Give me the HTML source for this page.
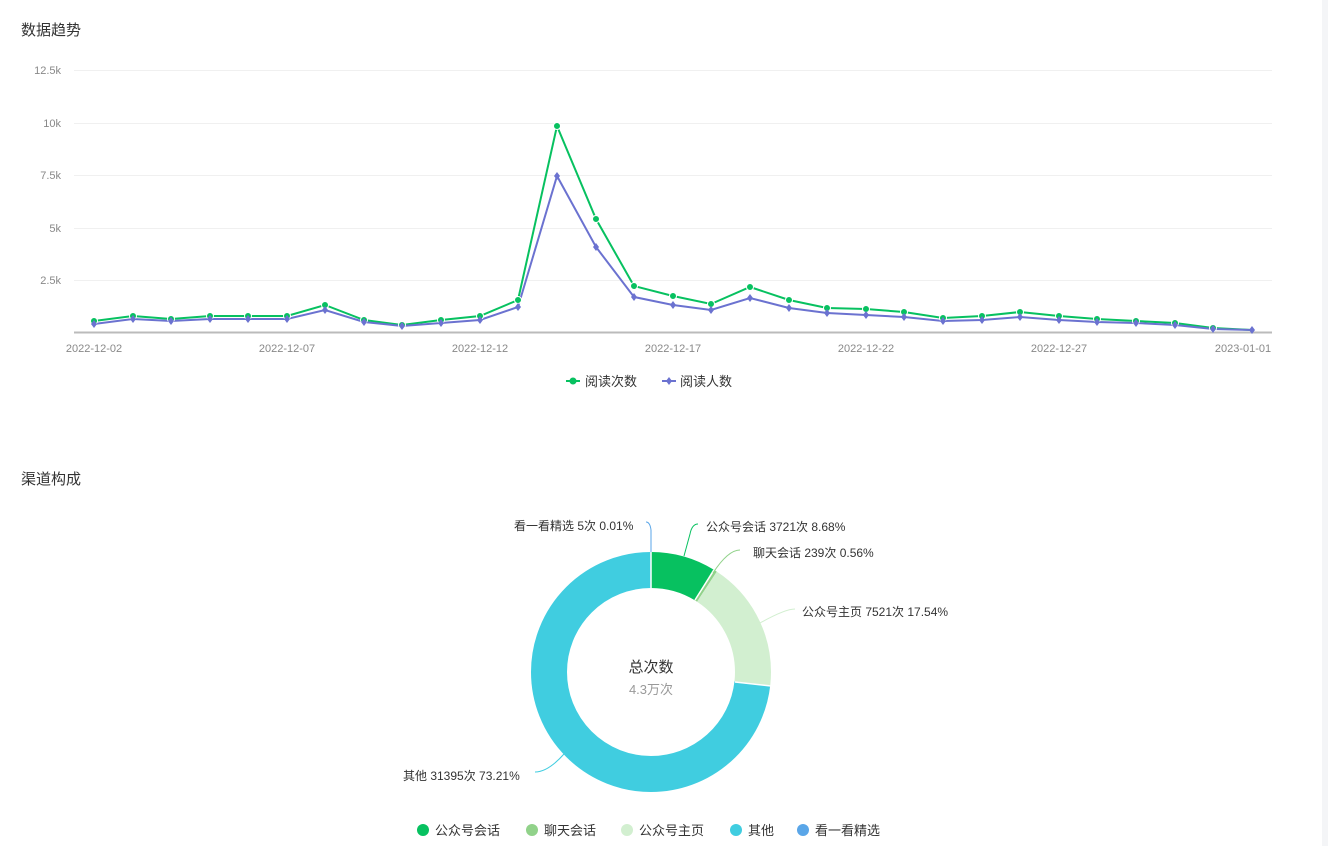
<!DOCTYPE html>
<html><head><meta charset="utf-8"><style>
body{margin:0;width:1328px;height:846px;background:#fff;font-family:"Liberation Sans","Noto Sans CJK SC",sans-serif;overflow:hidden;position:relative}
.side{position:absolute;right:0;top:0;width:6px;height:846px;background:#f4f5f7}
.t{position:absolute;left:21px;font-size:15px;color:#333}
</style></head><body>
<div class="side"></div>
<div class="t" style="top:19px">数据趋势</div>
<div class="t" style="top:468px">渠道构成</div>
<svg width="1328" height="846" style="position:absolute;left:0;top:0" font-family="Liberation Sans,Noto Sans CJK SC,sans-serif">
<g stroke="#f0f0f0" stroke-width="1">
<line x1="74" x2="1272" y1="70.5" y2="70.5"/><line x1="74" x2="1272" y1="123.5" y2="123.5"/><line x1="74" x2="1272" y1="175.5" y2="175.5"/><line x1="74" x2="1272" y1="228.5" y2="228.5"/><line x1="74" x2="1272" y1="280.5" y2="280.5"/>
</g>
<line x1="74" x2="1272" y1="332.5" y2="332.5" stroke="#bbb" stroke-width="2"/>
<g fill="#888" font-size="11" text-anchor="end">
<text x="61" y="74">12.5k</text><text x="61" y="127">10k</text><text x="61" y="179">7.5k</text><text x="61" y="232">5k</text><text x="61" y="284">2.5k</text>
</g>
<g fill="#888" font-size="11" text-anchor="middle">
<text x="94" y="352">2022-12-02</text><text x="287" y="352">2022-12-07</text><text x="480" y="352">2022-12-12</text><text x="673" y="352">2022-12-17</text><text x="866" y="352">2022-12-22</text><text x="1059" y="352">2022-12-27</text><text x="1243" y="352">2023-01-01</text>
</g>
<polyline fill="none" stroke="#07c160" stroke-width="2" points="94,321 133,316 171,319 210,316 248,316 287,316 325,305 364,320 402,325 441,320 480,316 518,300 557,126 596,219 634,286 673,296 711,304 750,287 789,300 827,308 866,309 904,312 943,318 982,316 1020,312 1059,316 1097,319 1136,321 1175,323 1213,328 1252,330"/>
<polyline fill="none" stroke="#6b72d0" stroke-width="2" points="94,324 133,319 171,321 210,319 248,319 287,319 325,310 364,322 402,326 441,323 480,320 518,307 557,176 596,247 634,297 673,305 711,310 750,298 789,308 827,313 866,315 904,317 943,321 982,320 1020,317 1059,320 1097,322 1136,323 1175,325 1213,329 1252,330"/>
<g fill="#07c160" stroke="#fff" stroke-width="1">
<circle cx="94" cy="321" r="3.5"/><circle cx="133" cy="316" r="3.5"/><circle cx="171" cy="319" r="3.5"/><circle cx="210" cy="316" r="3.5"/><circle cx="248" cy="316" r="3.5"/><circle cx="287" cy="316" r="3.5"/><circle cx="325" cy="305" r="3.5"/><circle cx="364" cy="320" r="3.5"/><circle cx="402" cy="325" r="3.5"/><circle cx="441" cy="320" r="3.5"/><circle cx="480" cy="316" r="3.5"/><circle cx="518" cy="300" r="3.5"/><circle cx="557" cy="126" r="3.5"/><circle cx="596" cy="219" r="3.5"/><circle cx="634" cy="286" r="3.5"/><circle cx="673" cy="296" r="3.5"/><circle cx="711" cy="304" r="3.5"/><circle cx="750" cy="287" r="3.5"/><circle cx="789" cy="300" r="3.5"/><circle cx="827" cy="308" r="3.5"/><circle cx="866" cy="309" r="3.5"/><circle cx="904" cy="312" r="3.5"/><circle cx="943" cy="318" r="3.5"/><circle cx="982" cy="316" r="3.5"/><circle cx="1020" cy="312" r="3.5"/><circle cx="1059" cy="316" r="3.5"/><circle cx="1097" cy="319" r="3.5"/><circle cx="1136" cy="321" r="3.5"/><circle cx="1175" cy="323" r="3.5"/><circle cx="1213" cy="328" r="3.5"/>
</g>
<g fill="#6b72d0">
<path d="M94 320l3 4-3 4-3-4z"/><path d="M133 315l3 4-3 4-3-4z"/><path d="M171 317l3 4-3 4-3-4z"/><path d="M210 315l3 4-3 4-3-4z"/><path d="M248 315l3 4-3 4-3-4z"/><path d="M287 315l3 4-3 4-3-4z"/><path d="M325 306l3 4-3 4-3-4z"/><path d="M364 318l3 4-3 4-3-4z"/><path d="M402 322l3 4-3 4-3-4z"/><path d="M441 319l3 4-3 4-3-4z"/><path d="M480 316l3 4-3 4-3-4z"/><path d="M518 303l3 4-3 4-3-4z"/><path d="M557 172l3 4-3 4-3-4z"/><path d="M596 243l3 4-3 4-3-4z"/><path d="M634 293l3 4-3 4-3-4z"/><path d="M673 301l3 4-3 4-3-4z"/><path d="M711 306l3 4-3 4-3-4z"/><path d="M750 294l3 4-3 4-3-4z"/><path d="M789 304l3 4-3 4-3-4z"/><path d="M827 309l3 4-3 4-3-4z"/><path d="M866 311l3 4-3 4-3-4z"/><path d="M904 313l3 4-3 4-3-4z"/><path d="M943 317l3 4-3 4-3-4z"/><path d="M982 316l3 4-3 4-3-4z"/><path d="M1020 313l3 4-3 4-3-4z"/><path d="M1059 316l3 4-3 4-3-4z"/><path d="M1097 318l3 4-3 4-3-4z"/><path d="M1136 319l3 4-3 4-3-4z"/><path d="M1175 321l3 4-3 4-3-4z"/><path d="M1213 325l3 4-3 4-3-4z"/><path d="M1252 326l3 4-3 4-3-4z"/>
</g>
<line x1="566" x2="580" y1="381" y2="381" stroke="#07c160" stroke-width="2"/><circle cx="573" cy="381" r="3.5" fill="#07c160"/>
<text x="585" y="386" font-size="13" fill="#333">阅读次数</text>
<line x1="662" x2="676" y1="381" y2="381" stroke="#6b72d0" stroke-width="2"/><path d="M669 377l3 4-3 4-3-4z" fill="#6b72d0"/>
<text x="680" y="386" font-size="13" fill="#333">阅读人数</text>
<g transform="translate(651,672) rotate(-90)" fill="none" stroke-width="36">
<circle r="102" stroke="#07c160" stroke-dasharray="55.6 640.9"/>
<circle r="102" stroke="#91d28a" stroke-dasharray="3.6 640.9" stroke-dashoffset="-55.6"/>
<circle r="102" stroke="#d2efd0" stroke-dasharray="112.4 640.9" stroke-dashoffset="-59.2"/>
<circle r="102" stroke="#40cde0" stroke-dasharray="469.3 640.9" stroke-dashoffset="-171.6"/>
</g>
<g stroke="#fff" stroke-width="1.5">
<line x1="651" y1="552" x2="651" y2="588"/><line x1="714" y1="570" x2="695" y2="600"/><line x1="771" y1="686" x2="735" y2="682"/>
</g>
<text x="651" y="672" font-size="15" fill="#333" text-anchor="middle">总次数</text>
<text x="651" y="694" font-size="13" fill="#999" text-anchor="middle">4.3万次</text>
<g fill="none" stroke-width="1">
<path d="M684 556 L690 534 Q692 524 698 524" stroke="#07c160"/>
<path d="M713 573 Q728 550 740 550" stroke="#91d28a"/>
<path d="M760 623 Q785 609 795 609" stroke="#d2efd0"/>
<path d="M651 552 L651 530 Q650 522 646 522" stroke="#5aa6e8"/>
<path d="M564 754 Q548 772 535 772" stroke="#40cde0"/>
</g>
<g font-size="12" fill="#333">
<text x="514" y="530">看一看精选 5次 0.01%</text>
<text x="706" y="531">公众号会话 3721次 8.68%</text>
<text x="753" y="557">聊天会话 239次 0.56%</text>
<text x="802" y="616">公众号主页 7521次 17.54%</text>
<text x="403" y="780">其他 31395次 73.21%</text>
</g>
<g font-size="13" fill="#333">
<circle cx="423" cy="830" r="6" fill="#07c160"/><text x="435" y="835">公众号会话</text>
<circle cx="532" cy="830" r="6" fill="#91d28a"/><text x="544" y="835">聊天会话</text>
<circle cx="627" cy="830" r="6" fill="#d2efd0"/><text x="639" y="835">公众号主页</text>
<circle cx="736" cy="830" r="6" fill="#40cde0"/><text x="748" y="835">其他</text>
<circle cx="803" cy="830" r="6" fill="#5aa6e8"/><text x="815" y="835">看一看精选</text>
</g>
</svg>
</body></html>
